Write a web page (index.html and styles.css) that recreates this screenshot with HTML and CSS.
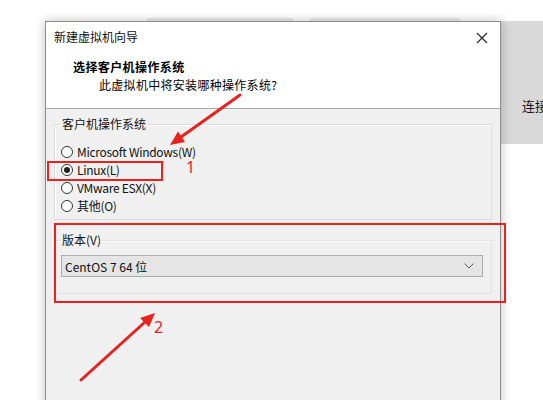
FILE: index.html
```html
<!DOCTYPE html>
<html lang="zh-CN">
<head>
<meta charset="utf-8">
<title>新建虚拟机向导</title>
<link rel="stylesheet" href="styles.css">
</head>
<body>
<div class="desk">
  <div class="strip s1"></div>
  <div class="strip s2"></div>
  <div class="backwin"><span class="backtext">连接</span></div>

  <div class="dialog">
    <div class="titlebar">
      <span class="title">新建虚拟机向导</span>
      <svg class="close" width="12" height="12" viewBox="0 0 12 12"><path d="M1 1L11 11M11 1L1 11" stroke="#222" stroke-width="1.1" fill="none"/></svg>
    </div>
    <div class="header">
      <div class="h-title">选择客户机操作系统</div>
      <div class="h-sub">此虚拟机中将安装哪种操作系统?</div>
    </div>
    <div class="body">
      <fieldset class="group g1">
        <legend>客户机操作系统</legend>
        <div class="radios">
          <div class="radio"><span class="dot"></span><span class="rt">Microsoft Windows(W)</span></div>
          <div class="radio"><span class="dot on"></span><span class="rt">Linux(L)</span></div>
          <div class="radio"><span class="dot"></span><span class="rt">VMware ESX(X)</span></div>
          <div class="radio"><span class="dot"></span><span class="rt">其他(O)</span></div>
        </div>
      </fieldset>
      <fieldset class="group g2">
        <legend>版本(V)</legend>
        <div class="select">
          <span>CentOS 7 64 位</span>
          <svg width="10" height="6" viewBox="0 0 10 6"><path d="M0.5 0.5L5 5L9.5 0.5" stroke="#555" stroke-width="1" fill="none"/></svg>
        </div>
      </fieldset>
    </div>
  </div>

  <div class="mark box1"></div>
  <div class="mark box2"></div>
  <span class="num n1">1</span>
  <span class="num n2">2</span>
  <svg class="arrows" width="543" height="400" viewBox="0 0 543 400">
    <g stroke="#e8231f" stroke-width="3" stroke-linecap="round" fill="#e8231f">
      <line x1="240" y1="95" x2="181" y2="137"/>
      <line x1="81" y1="380" x2="145" y2="322"/>
    </g>
    <g fill="#e8231f">
      <polygon points="170,145 185,142 178,131.5"/>
      <polygon points="155,313 149,327 140,318"/>
    </g>
  </svg>
</div>
</body>
</html>
```

FILE: styles.css
```css
* { box-sizing: border-box; }
html, body { margin: 0; padding: 0; background: #fff; }
body {
  font-family: "Noto Sans CJK SC", "Noto Sans", sans-serif;
  font-size: 12px;
  color: #000;
}
.desk {
  position: relative;
  width: 543px;
  height: 400px;
  overflow: hidden;
  background: #fff;
}
.strip {
  position: absolute;
  top: 18px;
  height: 3px;
  background: #ececec;
}
.s1 { left: 147px; width: 146px; }
.s2 { left: 310px; width: 150px; }
.backwin {
  position: absolute;
  left: 490px;
  top: 21px;
  width: 60px;
  height: 123px;
  background: #d9d9d9;
}
.backtext {
  position: absolute;
  left: 32px;
  top: 76px;
  font-size: 13px;
  line-height: 18px;
  color: #111;
}
.dialog {
  position: absolute;
  left: 45px;
  top: 21px;
  width: 456px;
  height: 400px;
  border: 1px solid #8c8c8c;
  background: #f0f0f0;
  box-shadow: 0 0 10px rgba(0,0,0,0.25);
  display: flex;
  flex-direction: column;
}
.titlebar {
  height: 30px;
  background: #fff;
  display: flex;
  align-items: center;
  justify-content: space-between;
  padding: 0 12px 0 8px;
}
.title { line-height: 16px; color: #111; }
.close { display: block; margin-top: 2px; }
.header {
  height: 57px;
  background: #fff;
  border-bottom: 1px solid #a9a9a9;
  padding: 6px 0 0 27px;
}
.h-title { font-weight: bold; line-height: 18px; letter-spacing: 0.4px; }
.h-sub { line-height: 18px; padding-left: 26px; letter-spacing: 0.3px; }
.body { padding: 7px 8px 0 8px; }
.group {
  margin: 0;
  padding: 0 0 4px 6px;
  border: 1px solid #dcdcdc;
  box-shadow: inset 1px 1px 0 #fff;
  min-width: 0;
}
.group legend {
  margin-left: 0;
  padding: 0 1px;
  line-height: 16px;
  color: #111;
}
.radios { margin-top: 11px; }
.radio {
  height: 18px;
  display: flex;
  align-items: center;
  gap: 4px;
}
.rt { letter-spacing: -0.3px; color: #111; line-height: 16px; }
.dot {
  width: 12px;
  height: 12px;
  border: 1px solid #333;
  border-radius: 50%;
  background: #fff;
  display: flex;
  align-items: center;
  justify-content: center;
  flex: none;
}
.dot.on::after {
  content: "";
  width: 6px;
  height: 6px;
  border-radius: 50%;
  background: #222;
}
.g2 {
  margin-top: 12px;
  padding: 0 8px 16px 6px;
  border-color: #e2e2e2;
}
.select {
  margin-top: 7px;
  height: 22px;
  background: #e5e5e5;
  border: 1px solid #adadad;
  display: flex;
  align-items: center;
  justify-content: space-between;
  padding: 0 8px 0 3px;
  color: #111;
}
.mark {
  position: absolute;
  border: 2px solid #e8231f;
}
.box1 { left: 47px; top: 161px; width: 116px; height: 20px; }
.box2 { left: 54px; top: 223px; width: 452px; height: 80px; }
.num {
  position: absolute;
  color: #e8231f;
  font-family: "Noto Sans", sans-serif;
  font-size: 16px;
  line-height: 14px;
}
.n1 { left: 186px; top: 160px; }
.n2 { left: 154px; top: 320px; }
.arrows { position: absolute; left: 0; top: 0; }
```
